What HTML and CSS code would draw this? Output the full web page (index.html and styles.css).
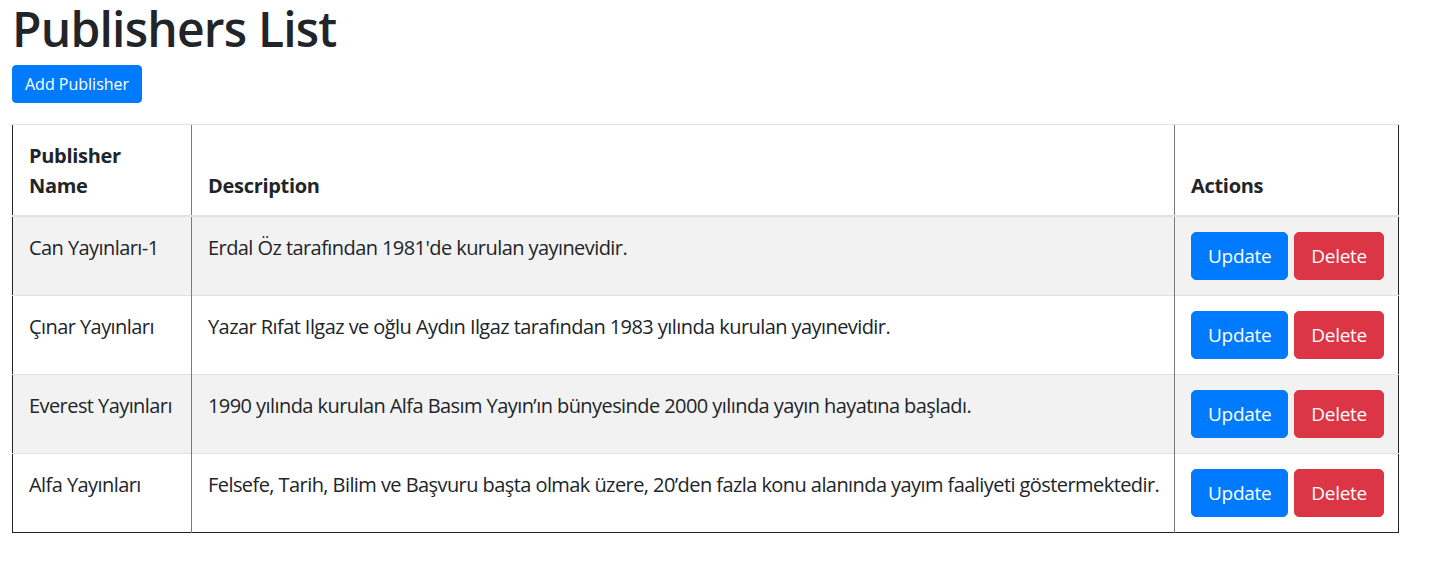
FILE: index.html
```html
<!DOCTYPE html>
<html lang="tr">
<head>
<meta charset="utf-8">
<title>Publishers List</title>
<link rel="stylesheet" href="styles.css">
</head>
<body>
<div class="page">
  <h1 class="title">Publishers List</h1>
  <button class="btn btn-primary">Add Publisher</button>
  <table class="table">
    <colgroup>
      <col class="col-name">
      <col class="col-desc">
      <col class="col-actions">
    </colgroup>
    <thead>
      <tr>
        <th>Publisher<br>Name</th>
        <th>Description</th>
        <th>Actions</th>
      </tr>
    </thead>
    <tbody>
      <tr class="odd">
        <td>Can Yayınları-1</td>
        <td>Erdal Öz tarafından 1981'de kurulan yayınevidir.</td>
        <td class="actions"><button class="btn btn-lg btn-primary">Update</button><button class="btn btn-lg btn-danger">Delete</button></td>
      </tr>
      <tr>
        <td>Çınar Yayınları</td>
        <td>Yazar Rıfat Ilgaz ve oğlu Aydın Ilgaz tarafından 1983 yılında kurulan yayınevidir.</td>
        <td class="actions"><button class="btn btn-lg btn-primary">Update</button><button class="btn btn-lg btn-danger">Delete</button></td>
      </tr>
      <tr class="odd">
        <td>Everest Yayınları</td>
        <td>1990 yılında kurulan Alfa Basım Yayın’ın bünyesinde 2000 yılında yayın hayatına başladı.</td>
        <td class="actions"><button class="btn btn-lg btn-primary">Update</button><button class="btn btn-lg btn-danger">Delete</button></td>
      </tr>
      <tr>
        <td>Alfa Yayınları</td>
        <td>Felsefe, Tarih, Bilim ve Başvuru başta olmak üzere, 20’den fazla konu alanında yayım faaliyeti göstermektedir.</td>
        <td class="actions"><button class="btn btn-lg btn-primary">Update</button><button class="btn btn-lg btn-danger">Delete</button></td>
      </tr>
    </tbody>
  </table>
</div>
</body>
</html>
```
FILE: styles.css
```css
html, body {
  margin: 0;
  padding: 0;
  background: #fff;
}
body {
  font-family: "Open Sans", "Noto Sans", sans-serif;
  font-size: 16px;
  line-height: 1.5;
  color: #212529;
}
.page {
  padding: 0 12px;
}
.title {
  margin: 0 0 7px;
  font-size: 48px;
  font-weight: 600;
  line-height: 58px;
  letter-spacing: -0.8px;
}
.btn {
  display: inline-block;
  font-family: inherit;
  font-size: 16px;
  line-height: 24px;
  padding: 6px 12px;
  border: 1px solid transparent;
  border-radius: 4px;
  color: #fff;
  cursor: pointer;
}
.btn-lg {
  font-size: 19px;
  letter-spacing: -0.3px;
  line-height: 30px;
  padding: 8px 16px;
  border-radius: 5px;
}
.btn-primary {
  background: #007bff;
  border-color: #007bff;
}
.btn-danger {
  background: #dc3545;
  border-color: #dc3545;
}
.btn + .btn {
  margin-left: 6px;
}
.table {
  margin-top: 21px;
  width: 1387px;
  border-collapse: collapse;
  table-layout: fixed;
  font-size: 20px;
  line-height: 30px;
  letter-spacing: -0.57px;
  border-left: 1px solid #212529;
  border-right: 1px solid #212529;
  border-bottom: 1px solid #212529;
}
.col-name { width: 179px; }
.col-actions { width: 224px; }
.table th,
.table td {
  padding: 16px;
  text-align: left;
  vertical-align: top;
  border-top: 1px solid #dee2e6;
}
.table td {
  white-space: nowrap;
}
.table th {
  font-weight: 700;
  vertical-align: bottom;
  padding-bottom: 14px;
  border-bottom: 2px solid #dee2e6;
  letter-spacing: -0.3px;
}
.table th + th,
.table td + td {
  border-left: 1px solid #7a7a7a;
}
.table tbody tr.odd {
  background: #f2f2f2;
}
.table td.actions {
  padding-top: 15px;
  padding-bottom: 15px;
}
```
